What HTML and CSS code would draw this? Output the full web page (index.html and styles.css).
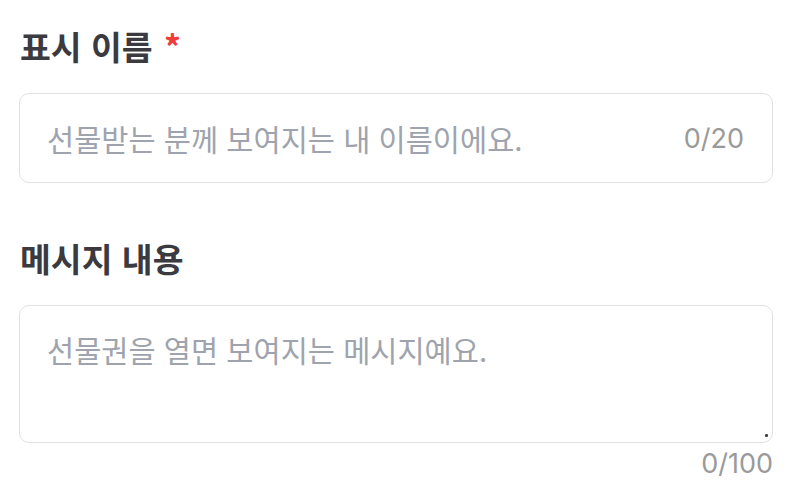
FILE: index.html
```html
<!DOCTYPE html>
<html lang="ko">
<head>
<meta charset="utf-8">
<link rel="stylesheet" href="styles.css">
</head>
<body>
<div class="form">
  <div class="field">
    <label class="label">표시 이름 <span class="req">*</span></label>
    <div class="input-box">
      <input class="input" type="text" placeholder="선물받는 분께 보여지는 내 이름이에요.">
      <span class="count">0/20</span>
    </div>
  </div>
  <div class="field field-msg">
    <label class="label">메시지 내용</label>
    <div class="textarea-wrap">
      <textarea class="textarea" placeholder="선물권을 열면 보여지는 메시지예요."></textarea>
      <span class="grip"></span>
    </div>
    <div class="count-below">0/100</div>
  </div>
</div>
</body>
</html>
```
FILE: styles.css
```css
* { box-sizing: border-box; }
html, body { margin: 0; padding: 0; background: #fff; }
body {
  font-family: "Noto Sans CJK KR", "Noto Sans", sans-serif;
}
.form {
  padding: 24px 25px 0 19px;
  display: flex;
  flex-direction: column;
  gap: 53px;
}
.field { display: flex; flex-direction: column; gap: 26px; }
.label {
  font-size: 33.5px;
  font-weight: 700;
  color: #3a3a40;
  line-height: 43px;
  height: 43px;
  padding-left: 1px;
}
.req { color: #f03b3b; margin-left: 2px; }
.input-box {
  display: flex;
  align-items: center;
  height: 90px;
  border: 1px solid #e2e2e4;
  border-radius: 10px;
  padding: 0 28px 0 27px;
}
.input {
  flex: 1;
  min-width: 0;
  border: none;
  outline: none;
  font-family: inherit;
  font-size: 29.5px;
  color: #333;
  background: transparent;
  padding: 0;
}
.input::placeholder, .textarea::placeholder { color: #9ea3ad; }
.count {
  font-family: "Inter", "Noto Sans", sans-serif;
  font-size: 27px;
  color: #9a9a9a;
}
.textarea-wrap { position: relative; display: flex; }
.textarea {
  flex: 1;
  height: 138px;
  border: 1px solid #e2e2e4;
  border-radius: 10px;
  padding: 23px 27px;
  font-family: inherit;
  font-size: 29.5px;
  line-height: 1.4;
  outline: none;
  resize: none;
}
.grip {
  position: absolute;
  right: 5px;
  bottom: 6px;
  width: 3px;
  height: 3px;
  background: #444;
  border-radius: 1px;
}
.count-below {
  margin-top: -21px;
  text-align: right;
  font-family: "Inter", "Noto Sans", sans-serif;
  font-size: 27px;
  line-height: 32px;
  color: #9a9a9a;
}
```
